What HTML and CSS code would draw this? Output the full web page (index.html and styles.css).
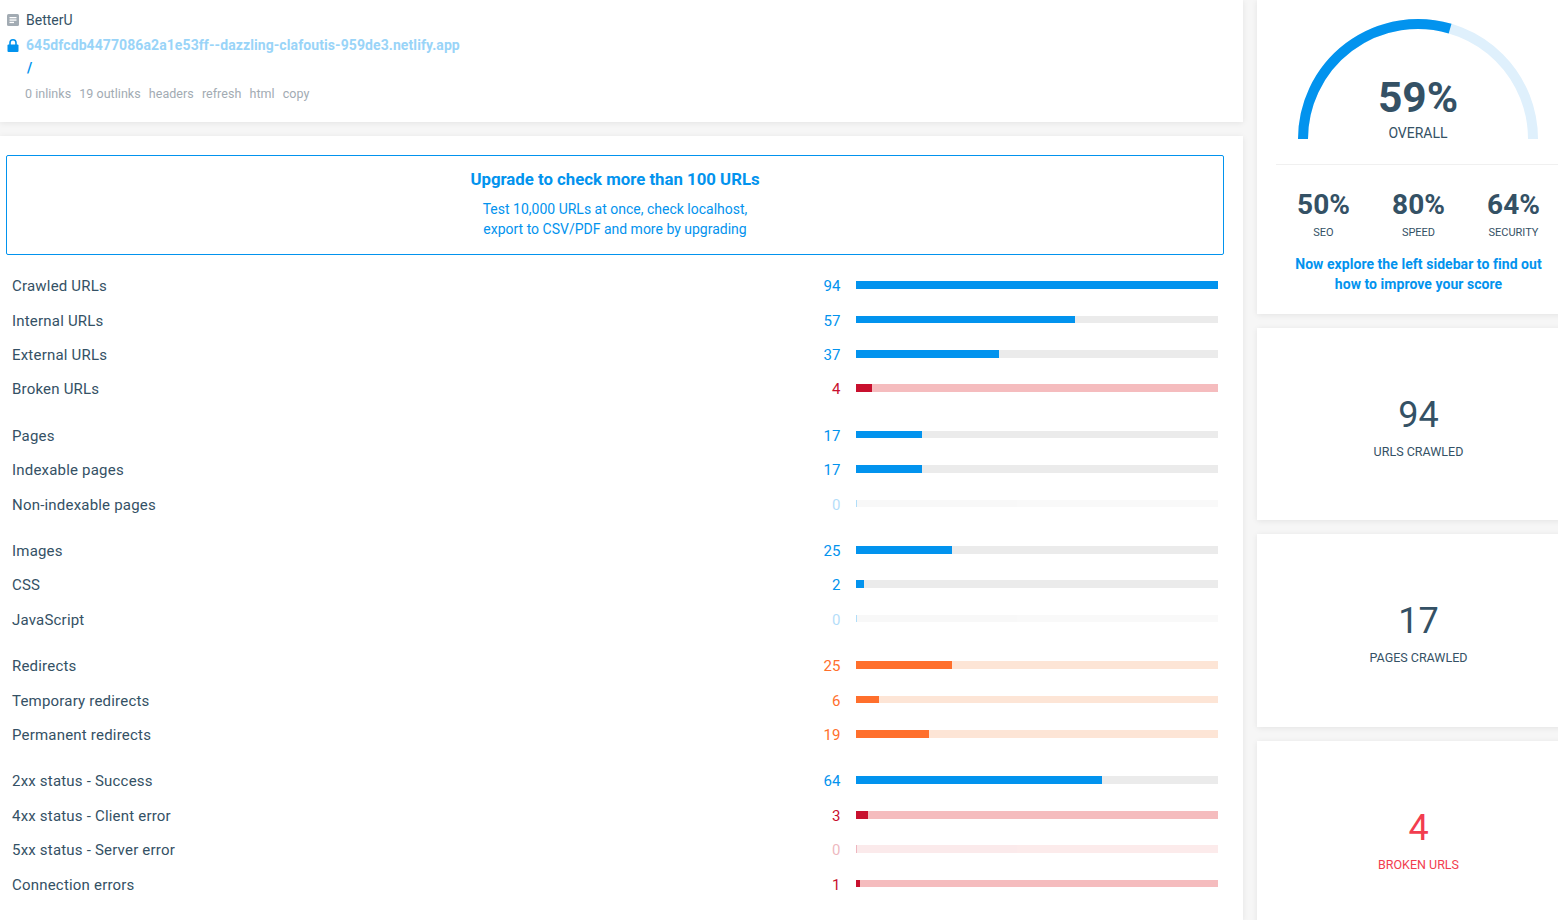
FILE: index.html
```html
<!DOCTYPE html>
<html lang="en">

<head>
    <meta charset="UTF-8">
    <meta name="viewport" content="width=device-width, initial-scale=1.0">
    <title>BetterU</title>
    <link rel="stylesheet" href="styles.css">
</head>

<body>
    <div class="page">
        <div class="main">
            <header class="card url-header">
                <div class="url-line">
                    <svg class="url-icon" viewBox="0 0 12 12" width="12" height="12">
                        <rect width="12" height="12" rx="1.5" fill="#a2abb3" />
                        <rect x="2.5" y="3" width="7" height="1.3" fill="#fff" />
                        <rect x="2.5" y="5.4" width="7" height="1.3" fill="#fff" />
                        <rect x="2.5" y="7.8" width="4.5" height="1.3" fill="#fff" />
                    </svg>
                    <span class="site-name">BetterU</span>
                </div>
                <div class="url-line host-line">
                    <svg class="url-icon" viewBox="0 0 12 13" width="12" height="13">
                        <path d="M3 6V3.8a3 3 0 0 1 6 0V6" fill="none" stroke="#0293ee" stroke-width="1.6" />
                        <rect x="0.5" y="5.5" width="11" height="7.5" rx="1" fill="#0293ee" />
                    </svg>
                    <a class="host">645dfcdb4477086a2a1e53ff--dazzling-clafoutis-959de3.netlify.app</a>
                </div>
                <div class="path">/</div>
                <div class="url-links">
                    <span>0 inlinks</span>
                    <span>19 outlinks</span>
                    <span>headers</span>
                    <span>refresh</span>
                    <span>html</span>
                    <span>copy</span>
                </div>
            </header>

            <section class="card report">
                <div class="upgrade">
                    <h3>Upgrade to check more than 100 URLs</h3>
                    <p>Test 10,000 URLs at once, check localhost,<br>export to CSV/PDF and more by upgrading</p>
                </div>

                <div class="group">
                    <div class="row"><span class="label">Crawled URLs</span><span class="num">94</span><div class="bar"><div class="fill" style="width:100%"></div></div></div>
                    <div class="row"><span class="label">Internal URLs</span><span class="num">57</span><div class="bar"><div class="fill" style="width:60.6%"></div></div></div>
                    <div class="row"><span class="label">External URLs</span><span class="num">37</span><div class="bar"><div class="fill" style="width:39.4%"></div></div></div>
                    <div class="row red"><span class="label">Broken URLs</span><span class="num">4</span><div class="bar"><div class="fill" style="width:4.3%"></div></div></div>
                </div>

                <div class="group">
                    <div class="row"><span class="label">Pages</span><span class="num">17</span><div class="bar"><div class="fill" style="width:18.1%"></div></div></div>
                    <div class="row"><span class="label">Indexable pages</span><span class="num">17</span><div class="bar"><div class="fill" style="width:18.1%"></div></div></div>
                    <div class="row zero"><span class="label">Non-indexable pages</span><span class="num">0</span><div class="bar"><div class="fill"></div></div></div>
                </div>

                <div class="group">
                    <div class="row"><span class="label">Images</span><span class="num">25</span><div class="bar"><div class="fill" style="width:26.6%"></div></div></div>
                    <div class="row"><span class="label">CSS</span><span class="num">2</span><div class="bar"><div class="fill" style="width:2.1%"></div></div></div>
                    <div class="row zero"><span class="label">JavaScript</span><span class="num">0</span><div class="bar"><div class="fill"></div></div></div>
                </div>

                <div class="group">
                    <div class="row orange"><span class="label">Redirects</span><span class="num">25</span><div class="bar"><div class="fill" style="width:26.6%"></div></div></div>
                    <div class="row orange"><span class="label">Temporary redirects</span><span class="num">6</span><div class="bar"><div class="fill" style="width:6.4%"></div></div></div>
                    <div class="row orange"><span class="label">Permanent redirects</span><span class="num">19</span><div class="bar"><div class="fill" style="width:20.2%"></div></div></div>
                </div>

                <div class="group">
                    <div class="row"><span class="label">2xx status - Success</span><span class="num">64</span><div class="bar"><div class="fill" style="width:68%"></div></div></div>
                    <div class="row red"><span class="label">4xx status - Client error</span><span class="num">3</span><div class="bar"><div class="fill" style="width:3.2%"></div></div></div>
                    <div class="row red zero"><span class="label">5xx status - Server error</span><span class="num">0</span><div class="bar"><div class="fill"></div></div></div>
                    <div class="row red"><span class="label">Connection errors</span><span class="num">1</span><div class="bar"><div class="fill" style="width:1.1%"></div></div></div>
                </div>
            </section>
        </div>

        <aside class="side">
            <div class="card score">
                <div class="gauge">
                    <svg viewBox="0 0 240 120" width="240" height="120">
                        <path d="M5 120A115 115 0 0 1 235 120" fill="none" stroke="#dff0fc" stroke-width="10" />
                        <path d="M5 120A115 115 0 0 1 152.1 9.6" fill="none" stroke="#0293ee" stroke-width="10" />
                    </svg>
                    <div class="gauge-text">
                        <div class="overall-num">59%</div>
                        <div class="overall-label">OVERALL</div>
                    </div>
                </div>
                <div class="subscores">
                    <div class="subscore"><div class="sub-num">50%</div><div class="sub-label">SEO</div></div>
                    <div class="subscore"><div class="sub-num">80%</div><div class="sub-label">SPEED</div></div>
                    <div class="subscore"><div class="sub-num">64%</div><div class="sub-label">SECURITY</div></div>
                </div>
                <p class="explore">Now explore the left sidebar to find out<br>how to improve your score</p>
            </div>

            <div class="card stat">
                <div class="stat-num">94</div>
                <div class="stat-label">URLS CRAWLED</div>
            </div>
            <div class="card stat">
                <div class="stat-num">17</div>
                <div class="stat-label">PAGES CRAWLED</div>
            </div>
            <div class="card stat broken">
                <div class="stat-num">4</div>
                <div class="stat-label">BROKEN URLS</div>
            </div>
        </aside>
    </div>
</body>

</html>
```

FILE: styles.css
```css
html,
body {
    height: 100%;
}

body {
    margin: 0;
    overflow: hidden;
    font-family: Roboto, "Liberation Sans", sans-serif;
    color: #345165;
    background-color: #f6f6f6;
}

.page {
    display: flex;
    gap: 14px;
    width: 1560px;
    height: 920px;
    overflow: hidden;
}

.card {
    background-color: #fff;
    box-shadow: 0 1px 6px rgba(0, 0, 0, 0.08);
}

.main {
    display: flex;
    flex-direction: column;
    gap: 14px;
    width: 1243px;
    flex: none;
}

/* url header */
.url-header {
    height: 122px;
    box-sizing: border-box;
    padding: 11px 7px 0;
    font-size: 14px;
}

.url-line {
    display: flex;
    align-items: center;
    gap: 7px;
    height: 18px;
}

.url-icon {
    flex: none;
}

.host-line {
    margin-top: 7px;
}

.host {
    font-weight: 700;
    letter-spacing: 0.09px;
    color: #99d4f8;
}

.path {
    margin: 5px 0 0 20px;
    height: 18px;
    line-height: 18px;
    font-weight: 700;
    color: #0293ee;
}

.url-links {
    display: flex;
    gap: 8.2px;
    margin: 9px 0 0 18px;
    font-size: 12.5px;
    letter-spacing: 0.03px;
    color: #a2abb3;
}

/* report */
.report {
    flex: 1;
    padding: 19px 19px 0 6px;
}

.upgrade {
    height: 100px;
    box-sizing: border-box;
    margin-bottom: 12.82px;
    padding-top: 13px;
    text-align: center;
    border: 1px solid #0293ee;
    border-radius: 2px;
    color: #0293ee;
}

.upgrade h3 {
    margin: 0;
    font-size: 16.8px;
    line-height: 20px;
    font-weight: 700;
}

.upgrade p {
    margin: 10px 0 0;
    font-size: 14px;
    line-height: 20px;
}

.group {
    margin-bottom: 12.05px;
}

.row {
    display: flex;
    align-items: center;
    height: 34.4px;
    padding-left: 6px;
    padding-right: 6px;
    font-size: 15px;
    --main: #0293ee;
    --track: #ebebeb;
}

.row.red {
    --main: #c8102e;
    --track: #f5bcbe;
}

.row.orange {
    --main: #ff6f2c;
    --track: #fde5d6;
}

.label {
    flex: 1;
    padding-top: 2.4px;
    letter-spacing: 0.2px;
}

.num {
    width: 60px;
    padding-top: 2.4px;
    text-align: right;
    margin-right: 15.4px;
    letter-spacing: 0.1px;
    color: var(--main);
}

.bar {
    width: 362px;
    height: 7.74px;
    background-color: var(--track);
}

.fill {
    height: 100%;
    background-color: var(--main);
}

.zero .num,
.zero .bar {
    opacity: 0.3;
}

.zero .fill {
    width: 1px;
}

/* right column */
.side {
    display: flex;
    flex-direction: column;
    gap: 14px;
    flex: 1;
}

.score {
    height: 313.8px;
    box-sizing: border-box;
    padding: 19px 0 0 18px;
    flex: none;
}

.gauge {
    position: relative;
    width: 240px;
    height: 120px;
    margin: 0 0 25px 23px;
}

.gauge svg {
    display: block;
}

.gauge-text {
    position: absolute;
    left: 0;
    right: 0;
    top: 54px;
    text-align: center;
}

.overall-num {
    font-size: 42.5px;
    line-height: 50px;
    font-weight: 700;
}

.overall-label {
    font-size: 14px;
    line-height: 20px;
}

.subscores {
    display: flex;
    justify-content: center;
    margin-left: 1px;
    padding: 22px 2px 0 0;
    border-top: 1px solid #f0f0f0;
}

.subscore {
    width: 95px;
    text-align: center;
}

.sub-num {
    font-size: 28px;
    line-height: 36px;
    font-weight: 700;
}

.sub-label {
    margin-top: 2px;
    font-size: 11px;
    line-height: 16px;
}

.explore {
    margin: 13px 1px 0 0;
    text-align: center;
    font-size: 14px;
    line-height: 20px;
    font-weight: 700;
    letter-spacing: 0.05px;
    color: #0293ee;
}

.stat {
    height: 192.4px;
    box-sizing: border-box;
    flex: none;
    padding: 63px 1px 0 18px;
    text-align: center;
}

.stat-num {
    font-size: 36px;
    line-height: 48px;
}

.stat-label {
    margin-top: 5px;
    font-size: 12.5px;
    line-height: 16px;
}

.broken {
    color: #f23d4f;
}
```
